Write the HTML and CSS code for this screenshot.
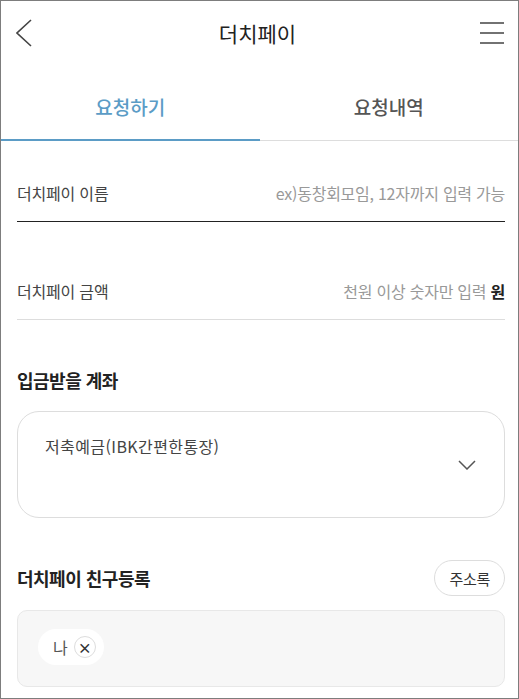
FILE: index.html
```html
<!DOCTYPE html>
<html lang="ko">
<head>
    <meta charset="UTF-8">
    <meta name="viewport" content="width=device-width, initial-scale=1.0">
    <title>더치페이</title>
    <link rel="stylesheet" href="styles.css">
</head>
<body>
    <div class="app">
        <header class="top-bar">
            <button class="icon-btn" aria-label="뒤로">
                <svg width="20" height="30" viewBox="0 0 20 30"><path d="M15 2 L1 15 L15 28" fill="none" stroke="#444" stroke-width="1.6"/></svg>
            </button>
            <h1 class="title">더치페이</h1>
            <button class="icon-btn" aria-label="메뉴">
                <svg width="26" height="24" viewBox="0 0 26 24"><path d="M1 2 H25 M1 12 H25 M1 22 H25" fill="none" stroke="#444" stroke-width="1.6"/></svg>
            </button>
        </header>

        <nav class="tabs">
            <div class="tab active">요청하기</div>
            <div class="tab">요청내역</div>
        </nav>

        <main class="content">
            <div class="field focused">
                <span class="field-label">더치페이 이름</span>
                <span class="field-hint">ex)동창회모임, 12자까지 입력 가능</span>
            </div>
            <div class="field">
                <span class="field-label">더치페이 금액</span>
                <span class="field-hint">천원 이상 숫자만 입력 <b class="unit">원</b></span>
            </div>

            <h2 class="section-title">입금받을 계좌</h2>
            <div class="account-select">
                <span class="account-name">저축예금(IBK간편한통장)</span>
                <svg class="select-arrow" width="18" height="10" viewBox="0 0 18 10"><path d="M1 1 L9 9 L17 1" fill="none" stroke="#555" stroke-width="1.5"/></svg>
            </div>

            <div class="section-row">
                <h2 class="section-title">더치페이 친구등록</h2>
                <button class="pill-btn">주소록</button>
            </div>
            <div class="friend-box">
                <span class="chip">나<span class="chip-remove">&times;</span></span>
            </div>
        </main>
    </div>
</body>
</html>
```

FILE: styles.css
```css
* {
    box-sizing: border-box;
}
body {
    margin: 0;
    font-family: "Noto Sans CJK KR", "Noto Sans", sans-serif;
    background-color: #fff;
    color: #222;
}
.app {
    width: 519px;
    height: 699px;
    border: 1px solid #7d7d7d;
    overflow: hidden;
    background-color: #fff;
}
.top-bar {
    height: 63px;
    display: flex;
    align-items: center;
    justify-content: space-between;
    padding: 0 13px 0 15px;
}
.icon-btn {
    background: none;
    border: none;
    padding: 0;
    display: flex;
}
.title {
    margin: 0;
    font-size: 21px;
    font-weight: 400;
    color: #222;
}
.tabs {
    display: flex;
    border-bottom: 1px solid #ddd;
}
.tab {
    flex: 1;
    text-align: center;
    font-size: 19px;
    font-weight: 500;
    line-height: 26px;
    padding: 30px 0 20px;
    color: #555;
    position: relative;
}
.tab.active {
    color: #5b9cc6;
}
.tab.active::after {
    content: "";
    position: absolute;
    left: 0;
    right: 0;
    bottom: -1px;
    height: 2px;
    background-color: #5b9cc6;
}
.content {
    padding: 0 13px 0 16px;
}
.field {
    display: flex;
    justify-content: space-between;
    align-items: center;
    padding: 40px 0 16px;
    line-height: 24px;
    border-bottom: 1px solid #ddd;
}
.field + .field {
    padding-top: 57px;
}
.field.focused {
    border-bottom-color: #222;
}
.field-label {
    font-size: 16px;
    color: #444;
    letter-spacing: -0.2px;
}
.field-hint {
    font-size: 16px;
    color: #999;
    letter-spacing: -0.25px;
}
.unit {
    color: #222;
}
.section-title {
    margin: 0;
    font-size: 18px;
    font-weight: 700;
    letter-spacing: -0.5px;
    line-height: 24px;
    color: #222;
}
.content > .section-title {
    margin-top: 48px;
}
.account-select {
    margin-top: 19px;
    height: 107px;
    border: 1px solid #ddd;
    border-radius: 22px;
    padding: 23px 28px 0 27px;
    display: flex;
    justify-content: space-between;
    align-items: flex-start;
}
.account-name {
    font-size: 16px;
    line-height: 22px;
    color: #444;
    letter-spacing: 0.4px;
}
.select-arrow {
    margin-top: 25px;
}
.section-row {
    margin-top: 42px;
    display: flex;
    justify-content: space-between;
    align-items: center;
}
.pill-btn {
    height: 36px;
    padding: 0 14px;
    border: 1px solid #ddd;
    border-radius: 18px;
    background-color: #fff;
    font-family: inherit;
    font-size: 15px;
    color: #333;
    letter-spacing: -0.3px;
}
.friend-box {
    margin-top: 14px;
    height: 77px;
    border: 1px solid #e8e8e8;
    border-radius: 10px;
    background-color: #f7f7f7;
    padding: 18px 20px;
}
.chip {
    display: inline-flex;
    align-items: center;
    height: 36px;
    padding: 0 8px 0 15px;
    border-radius: 18px;
    background-color: #fff;
    font-size: 16px;
    color: #555;
}
.chip-remove {
    width: 22px;
    height: 22px;
    margin-left: 6px;
    border: 1px solid #ddd;
    border-radius: 50%;
    display: inline-flex;
    align-items: center;
    justify-content: center;
    font-size: 14px;
    font-weight: 700;
    color: #333;
    line-height: 1;
}
```
